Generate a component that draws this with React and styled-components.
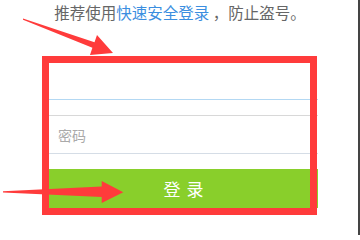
import styled, { createGlobalStyle } from "styled-components";

const GlobalStyle = createGlobalStyle`
  html, body {
    margin: 0;
    padding: 0;
    background: #fff;
  }
  body {
    font-family: "Noto Sans CJK SC", "Noto Sans", sans-serif;
  }
`;

const Page = styled.div`
  position: relative;
  width: 360px;
  height: 235px;
  display: flex;
  overflow: hidden;
`;

const Main = styled.div`
  flex: 1;
  display: flex;
  flex-direction: column;
`;

const EdgeBar = styled.div`
  width: 2px;
  background: #444;
`;

const Notice = styled.div`
  padding-left: 2px;
  height: 24px;
  font-size: 15.5px;
  line-height: 25px;
  text-align: center;
  color: #666;
  white-space: pre;
`;

const Link = styled.span`
  color: #3b8ee0;
`;

const Form = styled.form`
  width: 269px;
  margin: 39px 0 0 49px;
  display: flex;
  flex-direction: column;
`;

const Field = styled.input`
  box-sizing: border-box;
  height: ${(p) => p.$h}px;
  margin-bottom: 15px;
  padding: 0 9px;
  border: none;
  border-bottom: 1px solid ${(p) => (p.$focused ? "#b3d8f3" : "#d5dde6")};
  border-top: ${(p) => (p.$top ? "1px solid #d8d8d8" : "none")};
  outline: none;
  font-family: inherit;
  font-size: 14px;
  color: #333;
  background: #fff;
  &::placeholder {
    color: #aaa;
  }
`;

const SubmitButton = styled.button`
  height: 39px;
  border: none;
  background: #89cf2b;
  color: #fff;
  font-family: inherit;
  font-size: 17px;
  letter-spacing: 6px;
  text-indent: 6px;
  cursor: pointer;
`;

const Highlight = styled.div`
  position: absolute;
  left: 42px;
  top: 56px;
  width: 275px;
  height: 159px;
  box-sizing: border-box;
  border: 7px solid #ff3b3b;
  pointer-events: none;
`;

const Arrows = styled.svg`
  position: absolute;
  left: 0;
  top: 0;
  width: 360px;
  height: 235px;
  pointer-events: none;
`;

export default function App() {
  return (
    <>
      <GlobalStyle />
      <Page>
        <Main>
          <Notice>
            推荐使用<Link>快速安全登录</Link> ，防止盗号。
          </Notice>
          <Form onSubmit={(e) => e.preventDefault()}>
            <Field $h={37} $focused />
            <Field $h={39} $top placeholder="密码" type="password" />
            <SubmitButton type="submit">登录</SubmitButton>
          </Form>
        </Main>
        <EdgeBar />
        <Highlight />
        <Arrows viewBox="0 0 360 235">
          <polygon
            fill="#ff3b3b"
            points="23,18.5 94.5,42.2 97,35 113,53 90,55 92.4,47.8 23,19.8"
          />
          <polygon
            fill="#ff3b3b"
            points="3,191.2 101.7,186.5 101.7,181 123.3,192.3 101.7,203 101.7,197 3,192.6"
          />
        </Arrows>
      </Page>
    </>
  );
}
